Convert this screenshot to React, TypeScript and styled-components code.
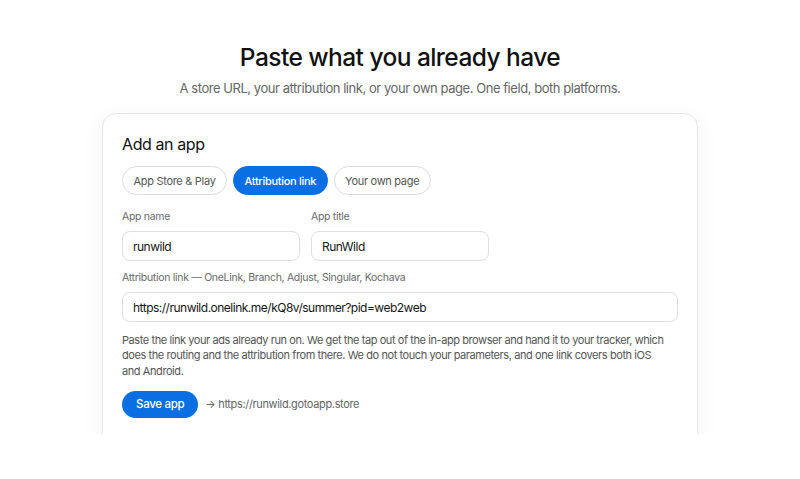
import React from "react";
import styled, { createGlobalStyle } from "styled-components";

const Global = createGlobalStyle`
  html, body { margin: 0; padding: 0; background: #ffffff; }
  body { font-family: Inter, "Noto Sans", "Liberation Sans", sans-serif; color: #111; -webkit-font-smoothing: antialiased; }
  * { box-sizing: border-box; }
`;

const Page = styled.main`
  height: 434px;
  overflow: hidden;
  display: flex;
  flex-direction: column;
  align-items: center;
  padding-top: 41px;
`;

const Title = styled.h1`
  margin: 0;
  font-size: 24.5px;
  line-height: 32px;
  font-weight: 500;
  letter-spacing: -0.55px;
  color: #111;
`;

const Subtitle = styled.p`
  margin: 6px 0 0;
  font-size: 13px;
  line-height: 18px;
  letter-spacing: -0.45px;
  color: #666;
`;

const Card = styled.section`
  margin-top: 16px;
  width: 596px;
  border: 1px solid #e6e6e6;
  border-radius: 14px;
  background: #fff;
  box-shadow: 0 6px 22px rgba(0, 0, 0, 0.06);
  padding: 19px 19px 40px;
  display: flex;
  flex-direction: column;
`;

const CardTitle = styled.h2`
  margin: 0;
  font-size: 16px;
  line-height: 22px;
  font-weight: 400;
  letter-spacing: -0.4px;
  color: #111;
`;

const Tabs = styled.div`
  display: flex;
  gap: 6px;
  margin-top: 11px;
`;

const Tab = styled.button<{ $active?: boolean }>`
  height: 29px;
  padding: 0 10.5px;
  border-radius: 999px;
  font-family: inherit;
  font-size: 11px;
  letter-spacing: -0.3px;
  font-weight: ${(p) => (p.$active ? 500 : 400)};
  border: 1px solid ${(p) => (p.$active ? "#0b6fe4" : "#dcdcdc")};
  background: ${(p) => (p.$active ? "#0b6fe4" : "#fff")};
  color: ${(p) => (p.$active ? "#fff" : "#555")};
`;

const Row = styled.div`
  display: flex;
  gap: 11px;
  margin-top: 15px;
`;

const Field = styled.label<{ $grow?: boolean }>`
  display: flex;
  flex-direction: column;
  gap: 7px;
  width: ${(p) => (p.$grow ? "100%" : "178px")};
`;

const Label = styled.span`
  font-size: 10.5px;
  line-height: 14px;
  letter-spacing: -0.3px;
  color: #6a6a6a;
`;

const Input = styled.div`
  height: 30px;
  border: 1px solid #dedede;
  border-radius: 8px;
  padding: 0 10px;
  display: flex;
  align-items: center;
  font-size: 12px;
  letter-spacing: -0.5px;
  color: #161616;
`;

const WideRow = styled.div`
  display: flex;
  margin-top: 10px;
`;

const Help = styled.p`
  margin: 11px 0 0;
  max-width: 546px;
  font-size: 11px;
  line-height: 15.3px;
  letter-spacing: -0.42px;
  color: #555;
`;

const Actions = styled.div`
  display: flex;
  align-items: center;
  gap: 7px;
  margin-top: 12px;
`;

const Primary = styled.button`
  height: 27px;
  padding: 0 14px;
  border: none;
  border-radius: 999px;
  background: #0b6fe4;
  color: #fff;
  font-family: inherit;
  font-size: 11.5px;
  letter-spacing: -0.3px;
  font-weight: 500;
`;

const Target = styled.span`
  font-size: 11px;
  letter-spacing: -0.35px;
  color: #666;
`;

export default function App() {
  return (
    <>
      <Global />
      <Page>
        <Title>Paste what you already have</Title>
        <Subtitle>A store URL, your attribution link, or your own page. One field, both platforms.</Subtitle>
        <Card>
          <CardTitle>Add an app</CardTitle>
          <Tabs>
            <Tab>App Store &amp; Play</Tab>
            <Tab $active>Attribution link</Tab>
            <Tab>Your own page</Tab>
          </Tabs>
          <Row>
            <Field>
              <Label>App name</Label>
              <Input>runwild</Input>
            </Field>
            <Field>
              <Label>App title</Label>
              <Input>RunWild</Input>
            </Field>
          </Row>
          <WideRow>
            <Field $grow>
              <Label>Attribution link — OneLink, Branch, Adjust, Singular, Kochava</Label>
              <Input>https://runwild.onelink.me/kQ8v/summer?pid=web2web</Input>
            </Field>
          </WideRow>
          <Help>
            Paste the link your ads already run on. We get the tap out of the in-app browser and hand it to your
            tracker, which does the routing and the attribution from there. We do not touch your parameters, and one
            link covers both iOS and Android.
          </Help>
          <Actions>
            <Primary>Save app</Primary>
            <Target>→ https://runwild.gotoapp.store</Target>
          </Actions>
        </Card>
      </Page>
    </>
  );
}
